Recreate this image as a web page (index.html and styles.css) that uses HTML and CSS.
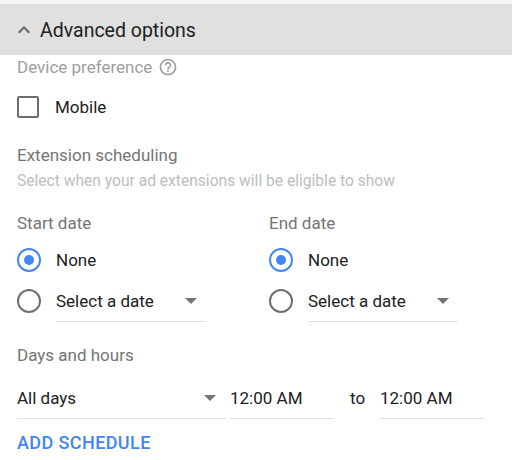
FILE: index.html
```html
<!DOCTYPE html>
<html lang="en">
<head>
    <meta charset="UTF-8">
    <meta name="viewport" content="width=device-width, initial-scale=1.0">
    <title>Advanced options</title>
    <link rel="stylesheet" href="styles.css">
</head>
<body>
    <div class="top-strip"></div>
    <div class="panel-header">
        <svg class="chevron" viewBox="0 0 24 24" width="24" height="24">
            <path d="M12 8l-6 6 1.41 1.41L12 10.83l4.59 4.58L18 14z" fill="#5f6368"/>
        </svg>
        <span>Advanced options</span>
    </div>
    <div class="panel-body">
        <div class="label light">
            Device preference
            <svg class="help" viewBox="0 0 24 24" width="20" height="20">
                <path d="M11 18h2v-2h-2v2zm1-16C6.48 2 2 6.48 2 12s4.48 10 10 10 10-4.48 10-10S17.52 2 12 2zm0 18c-4.41 0-8-3.59-8-8s3.59-8 8-8 8 3.59 8 8-3.59 8-8 8zm0-14c-2.21 0-4 1.79-4 4h2c0-1.1.9-2 2-2s2 .9 2 2c0 2-3 1.75-3 5h2c0-2.25 3-2.5 3-5 0-2.21-1.79-4-4-4z" fill="#9e9e9e"/>
            </svg>
        </div>
        <label class="check-row">
            <span class="checkbox"></span>
            <span>Mobile</span>
        </label>

        <div class="label section-title">Extension scheduling</div>
        <div class="hint">Select when your ad extensions will be eligible to show</div>

        <div class="dates">
            <div class="date-col">
                <div class="label">Start date</div>
                <div class="radio-row">
                    <span class="radio checked"></span>
                    <span>None</span>
                </div>
                <div class="radio-row">
                    <span class="radio"></span>
                    <div class="select">
                        <span>Select a date</span>
                        <span class="caret"></span>
                    </div>
                </div>
            </div>
            <div class="date-col">
                <div class="label">End date</div>
                <div class="radio-row">
                    <span class="radio checked"></span>
                    <span>None</span>
                </div>
                <div class="radio-row">
                    <span class="radio"></span>
                    <div class="select">
                        <span>Select a date</span>
                        <span class="caret"></span>
                    </div>
                </div>
            </div>
        </div>

        <div class="label days-title">Days and hours</div>
        <div class="schedule-row">
            <div class="field days">
                <span>All days</span>
                <span class="caret"></span>
            </div>
            <div class="field time">12:00 AM</div>
            <span class="to">to</span>
            <div class="field time">12:00 AM</div>
        </div>
        <button class="add-btn">ADD SCHEDULE</button>
    </div>
</body>
</html>
```

FILE: styles.css
```css
body {
    margin: 0;
    font-family: Roboto, "Liberation Sans", Arial, sans-serif;
    font-size: 17px;
    color: #212121;
    background: #fff;
}
.top-strip {
    height: 4px;
    background: linear-gradient(#efefef, #fafafa);
}
.panel-header {
    display: flex;
    align-items: center;
    height: 51px;
    background: #e0e0e0;
    border-top: 1px solid #d8d8d8;
    box-sizing: border-box;
    font-size: 19.5px;
    color: #212121;
}
.chevron {
    margin-left: 12px;
    margin-right: 4px;
}
.panel-body {
    padding: 0 17px;
}
.label {
    display: flex;
    align-items: center;
    height: 24px;
    color: #757575;
}
.label.light {
    color: #9e9e9e;
}
.help {
    margin-left: 6px;
}
.check-row {
    display: flex;
    align-items: center;
    height: 40px;
    margin-top: 8px;
}
.checkbox {
    width: 18px;
    height: 18px;
    border: 2px solid #6f6f6f;
    border-radius: 2px;
    margin-right: 16px;
}
.section-title {
    margin-top: 16px;
}
.hint {
    height: 20px;
    line-height: 20px;
    margin-top: 4px;
    font-size: 15.6px;
    color: #bdbdbd;
}
.dates {
    display: grid;
    grid-template-columns: 252px 1fr;
    margin-top: 20px;
}
.radio-row {
    display: flex;
    align-items: center;
    height: 40px;
}
.radio-row + .radio-row {
    height: 42px;
}
.date-col .label + .radio-row {
    margin-top: 5px;
}
.radio {
    position: relative;
    width: 20px;
    height: 20px;
    border: 2px solid #6f6f6f;
    border-radius: 50%;
    margin-right: 15px;
}
.radio.checked {
    border-color: #4285f4;
}
.radio.checked::after {
    content: "";
    position: absolute;
    left: 5px;
    top: 5px;
    width: 10px;
    height: 10px;
    border-radius: 50%;
    background: #4285f4;
}
.select {
    display: flex;
    align-items: center;
    justify-content: space-between;
    align-self: stretch;
    width: 150px;
    padding-right: 9px;
    box-sizing: border-box;
    border-bottom: 1px solid #e0e0e0;
}
.caret {
    width: 0;
    height: 0;
    border-left: 6px solid transparent;
    border-right: 6px solid transparent;
    border-top: 6px solid #757575;
}
.days-title {
    margin-top: 21px;
}
.schedule-row {
    display: flex;
    align-items: center;
    height: 42px;
    margin-top: 10px;
}
.field {
    display: flex;
    align-items: center;
    align-self: stretch;
    box-sizing: border-box;
    border-bottom: 1px solid #e0e0e0;
}
.field.days {
    justify-content: space-between;
    width: 209px;
    padding-right: 10px;
    margin-right: 4px;
}
.field.time {
    width: 104px;
}
.to {
    width: 46px;
    padding-left: 16px;
    box-sizing: border-box;
}
.add-btn {
    display: block;
    height: 24px;
    margin-top: 11px;
    padding: 0;
    border: none;
    background: none;
    font-family: inherit;
    font-size: 18px;
    font-weight: 500;
    letter-spacing: 0.4px;
    color: #4285f4;
    cursor: pointer;
}
```
